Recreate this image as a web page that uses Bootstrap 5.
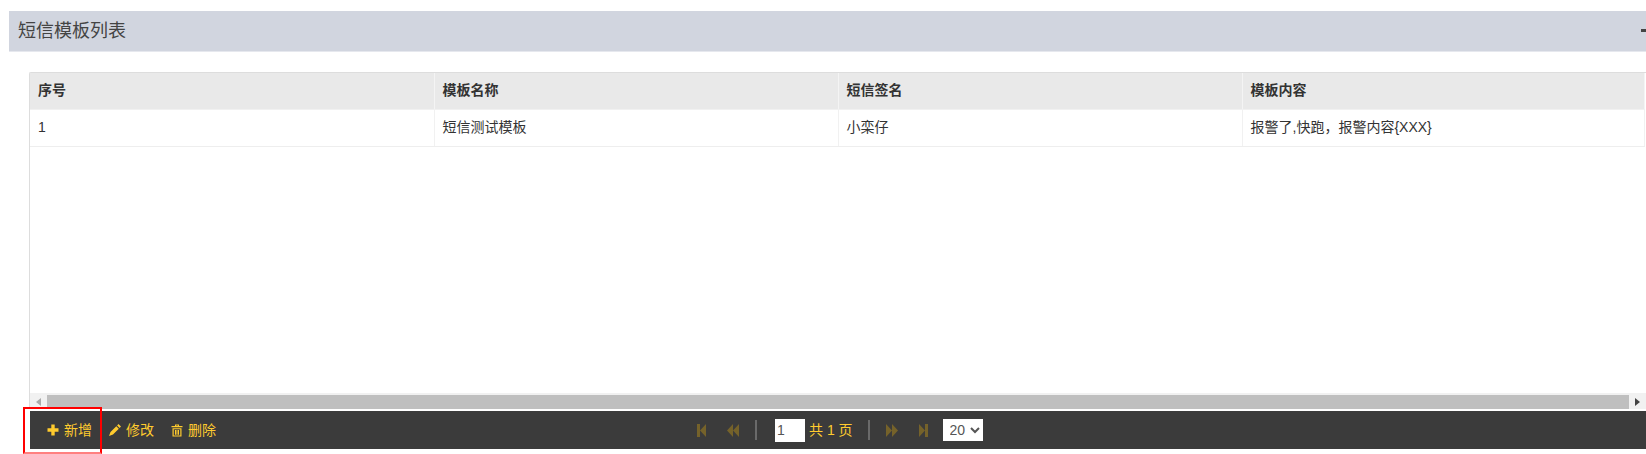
<!doctype html>
<html lang="zh-CN">
<head>
<meta charset="utf-8">
<title>短信模板列表</title>
<link href="https://cdn.jsdelivr.net/npm/bootstrap@5.3.0/dist/css/bootstrap.min.css" rel="stylesheet">
<style>
html,body{height:454px;overflow:hidden;background:#fff}
body{font-family:"Liberation Sans","Noto Sans CJK SC",sans-serif;font-size:14px;color:#333;position:relative}
.page-wrap{padding-top:11px;padding-left:9px}
.panel-head{height:41px;background:#d1d5df;border-bottom:1px solid #e6e8ee;padding-left:9px;font-size:18px;line-height:40px;color:#444;position:relative;overflow:hidden}
.collapse-mark{position:absolute;right:0;top:18px;width:5px;height:3px;background:#444}
.grid-frame{margin:20px 0 0 20px;height:337px;border:1px solid #ddd;border-right:0;border-bottom:0;border-radius:2px 0 0 0;display:flex;flex-direction:column}
.grid-body{flex:1 1 auto;overflow:hidden}
.sms-table{table-layout:fixed;width:1615px;margin:0;border-collapse:collapse}
.sms-table th,.sms-table td{padding:0 8px;vertical-align:middle;border-right:1px solid #f1f1f1;border-bottom:1px solid #eee;color:#333;font-size:14px}
.sms-table th{height:36px;background:#e9e9e9;font-weight:700;border-bottom-color:#f1f1f1;border-right-color:#f4f4f4}
.sms-table td{height:37px;background:#fff}
.sms-table .col-first{width:404px}
.sms-table .col-mid{width:404px}
.hscroll{height:16px;background:#f1f1f1;display:flex;align-items:stretch;padding-top:2px;flex:none}
.hscroll-btn{width:17px;display:flex;align-items:center;justify-content:center;flex:none}
.hscroll-thumb{flex:1 1 auto;background:#bfbfbf}
.toolbar{margin:2px 0 0 21px;height:38px;background:#3b3b3b;color:#ffcb2e;display:flex;align-items:center;position:relative;font-size:14px}
.tool-left{display:flex;align-items:center;padding-left:17px;width:667px;flex:none}
.tool-item{display:flex;align-items:center;gap:5px;margin-right:17px;color:#ffcb2e}
.tool-item svg{display:block}
.pager{display:flex;align-items:center}
.pager svg{display:block}
.gap-15{margin-left:15px}
.gap-16{margin-left:16px}
.gap-18{margin-left:18px}
.gap-21{margin-left:21px}
.gap-4{margin-left:4px}
.pg-sep{width:2px;height:20px;background:#6a6a6a;flex:none}
.pg-input{width:30px;height:23px;border:0;background:#fff;color:#555;padding:0 2px;font-size:14px;font-family:inherit;border-radius:0;outline:0}
.pg-select{width:40px;height:22px;border:0;background:#fff;color:#555;font-size:14px;font-family:inherit;border-radius:0;padding:0 0 0 3px;outline:0}
.red-mark{position:absolute;left:23px;top:407px;width:79px;height:47px;border:2px solid #f00;border-bottom-color:#ff8080;pointer-events:none}
</style>
</head>
<body>
<div class="page-wrap">
  <div class="panel-head">短信模板列表<span class="collapse-mark"></span></div>
  <div class="grid-frame">
    <div class="grid-body">
      <table class="sms-table">
        <thead><tr><th class="col-first">序号</th><th class="col-mid">模板名称</th><th class="col-mid">短信签名</th><th>模板内容</th></tr></thead>
        <tbody><tr><td>1</td><td>短信测试模板</td><td>小栾仔</td><td>报警了,快跑，报警内容{XXX}</td></tr></tbody>
      </table>
    </div>
    <div class="hscroll">
      <div class="hscroll-btn"><svg width="5" height="8" viewBox="0 0 5 8"><path d="M5 0V8L0 4Z" fill="#aaa"/></svg></div>
      <div class="hscroll-thumb"></div>
      <div class="hscroll-btn"><svg width="5" height="8" viewBox="0 0 5 8"><path d="M0 0V8L5 4Z" fill="#444"/></svg></div>
    </div>
  </div>
  <div class="toolbar">
    <div class="tool-left">
      <div class="tool-item">
        <svg width="12" height="12" viewBox="0 0 12 12"><path d="M4.300 .5h3.400v3.800h3.800v3.400H7.700v3.800H4.300V7.700H.5V4.300h3.800z" fill="#ffcb2e"/></svg>
        <span>新增</span>
      </div>
      <div class="tool-item">
        <svg width="12" height="12" viewBox="0 0 12 12"><path d="M9.500 0 12 2.500 10.600 3.900 8.100 1.400zM7.300 2.200l2.500 2.500-5.800 5.800L0 12l1.500-4z" fill="#ffcb2e"/></svg>
        <span>修改</span>
      </div>
      <div class="tool-item">
        <svg width="12" height="13" viewBox="0 0 12 13"><path fill-rule="evenodd" d="M4 .5h4v1.500h3.500v1.200H.5V2H4zM5 1.500V2h2v-.5zM1.500 4.200h9v8.300h-9zM2.700 5.300v6.100h6.600V5.300z" fill="#ffcb2e"/><path d="M4 6h1v4.700H4zM5.500 6h1v4.700h-1zM7 6h1v4.700H7z" fill="#ffcb2e"/></svg>
        <span>删除</span>
      </div>
    </div>
    <div class="pager">
      <svg width="9" height="13" viewBox="0 0 9 13"><path d="M0 0h3v13H0zM9 0v13L3 6.500z" fill="#75622a"/></svg>
      <svg class="gap-21" width="12" height="13" viewBox="0 0 12 13"><path d="M6 0v13L0 6.500zM12 0v13L6 6.500z" fill="#75622a"/></svg>
      <span class="pg-sep gap-16"></span>
      <input class="pg-input gap-18" value="1" aria-label="页码">
      <span class="gap-4">共 1 页</span>
      <span class="pg-sep gap-15"></span>
      <svg class="gap-16" width="12" height="13" viewBox="0 0 12 13"><path d="M0 0v13L6 6.500zM6 0v13L12 6.500z" fill="#75622a"/></svg>
      <svg class="gap-21" width="9" height="13" viewBox="0 0 9 13"><path d="M0 0v13L6 6.500zM6 0h3v13H6z" fill="#75622a"/></svg>
      <select class="pg-select gap-15" aria-label="每页条数"><option>20</option></select>
    </div>
  </div>
</div>
<div class="red-mark"></div>
</body>
</html>
